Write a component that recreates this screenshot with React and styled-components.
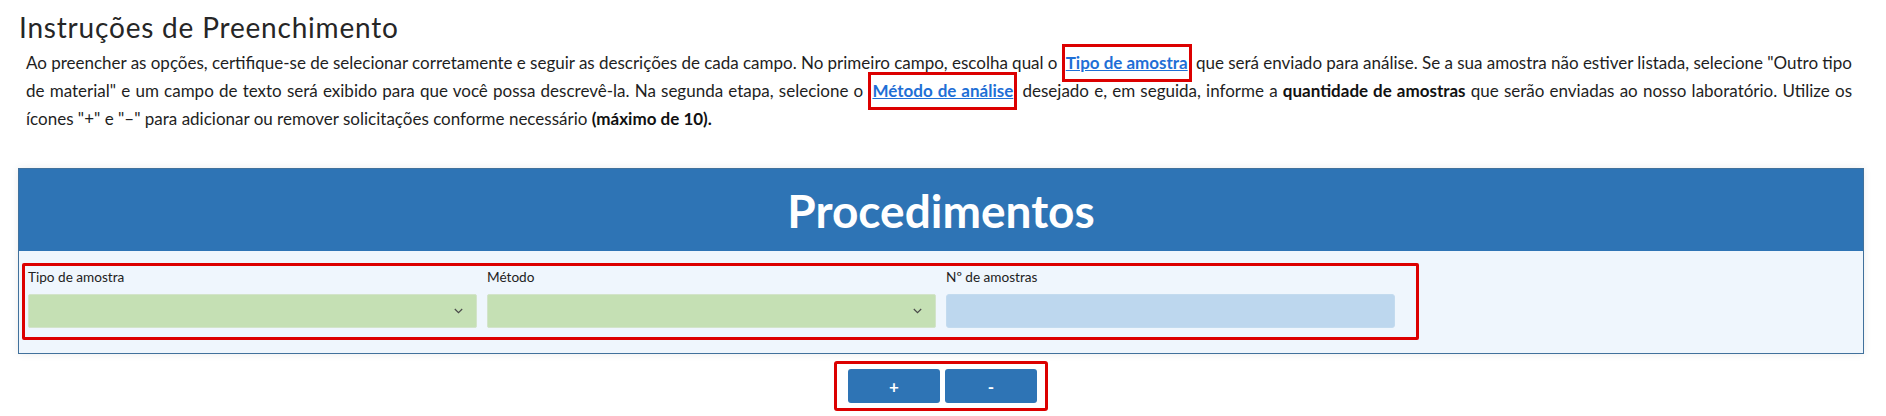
import React from 'react'
import styled, { createGlobalStyle } from 'styled-components'

const GlobalStyle = createGlobalStyle`
    body {
        margin: 0;
        background: #ffffff;
        font-family: Lato, "Open Sans", sans-serif;
        color: #222222;
    }
`

function Chevron() {
    return (
        <svg width="9" height="6" viewBox="0 0 9 6">
            <polyline points="0.8,1 4.5,4.6 8.2,1" fill="none" stroke="#4a4a4a" strokeWidth="1.2" />
        </svg>
    )
}

function App() {
    return (
        <Page>
            <GlobalStyle />
            <Title>Instruções de Preenchimento</Title>
            <Intro>
                <Line>
                    Ao preencher as opções, certifique-se de selecionar corretamente e seguir as descrições de cada campo. No primeiro campo, escolha qual o <Marked href="#">Tipo de amostra</Marked> que será enviado para análise. Se a sua amostra não estiver listada, selecione "Outro tipo
                </Line>
                <Line>
                    de material" e um campo de texto será exibido para que você possa descrevê-la. Na segunda etapa, selecione o <Marked href="#">Método de análise</Marked> desejado e, em seguida, informe a <b>quantidade de amostras</b> que serão enviadas ao nosso laboratório. Utilize os
                </Line>
                <Line $last>
                    ícones "+" e "–" para adicionar ou remover solicitações conforme necessário <b>(máximo de 10).</b>
                </Line>
            </Intro>

            <Panel>
                <PanelHeader>Procedimentos</PanelHeader>
                <PanelBody>
                    <FieldsRow>
                        <Field>
                            <Label>Tipo de amostra</Label>
                            <Select><Chevron /></Select>
                        </Field>
                        <Field>
                            <Label>Método</Label>
                            <Select><Chevron /></Select>
                        </Field>
                        <Field>
                            <Label>Nº de amostras</Label>
                            <Input />
                        </Field>
                    </FieldsRow>
                </PanelBody>
            </Panel>

            <Actions>
                <ActionGroup>
                    <Button>+</Button>
                    <Button>-</Button>
                </ActionGroup>
            </Actions>
        </Page>
    )
}

export default App

const Page = styled.div`
    padding: 11px 22px 0 18px;
`

const Title = styled.h3`
    margin: 0;
    padding-left: 1px;
    font-size: 28px;
    line-height: 32px;
    letter-spacing: 0.8px;
    font-weight: 400;
    color: #262626;
`

const Intro = styled.p`
    margin: 6px 12px 0 8px;
    font-size: 17px;
    line-height: 28px;
    word-spacing: -1.5px;
    color: #1e1e1e;

    b {
        font-weight: 700;
        color: #111111;
    }
`

const Line = styled.span`
    display: block;
    text-align: justify;
    text-align-last: ${({ $last }) => ($last ? 'left' : 'justify')};
    word-spacing: ${({ $last }) => ($last ? 'normal' : '-1.5px')};
`

const Marked = styled.a`
    color: #1f6fd6;
    font-weight: 700;
    text-decoration: underline;
    border: 3px solid #dc0000;
    padding: 5px 1px 6px;
`

const Panel = styled.section`
    margin-top: 35px;
    border: 1px solid #41719c;
    background: #eff6fd;
    box-shadow: 0 0 8px rgba(0, 0, 0, 0.08);
`

const PanelHeader = styled.h2`
    margin: 0;
    height: 82px;
    display: flex;
    align-items: center;
    justify-content: center;
    background: #2e74b5;
    color: #ffffff;
    font-size: 46px;
    font-weight: 700;
`

const PanelBody = styled.div`
    padding: 12px 3px 13px 3px;
`

const FieldsRow = styled.div`
    display: grid;
    grid-template-columns: repeat(3, 449px);
    column-gap: 10px;
    width: fit-content;
    padding: 2px 21px 9px 3px;
    border: 3px solid #dc0000;
    border-radius: 2px;
`

const Field = styled.div`
    display: flex;
    flex-direction: column;
    gap: 8px;
`

const Label = styled.label`
    font-size: 13.6px;
    line-height: 18px;
    color: #222222;
`

const Select = styled.div`
    height: 34px;
    box-sizing: border-box;
    display: flex;
    align-items: center;
    justify-content: flex-end;
    padding-right: 13px;
    background: #c5e0b4;
    border: 1px solid #d3e4ca;
    border-radius: 2px;
`

const Input = styled.div`
    height: 34px;
    box-sizing: border-box;
    background: #bdd7ee;
    border: 1px solid #c3dbef;
    border-radius: 3px;
`

const Actions = styled.div`
    display: flex;
    justify-content: center;
    margin-top: 7px;
`

const ActionGroup = styled.div`
    display: flex;
    gap: 5px;
    padding: 5px 8px 5px 11px;
    border: 3px solid #dc0000;
    border-radius: 3px;
`

const Button = styled.button`
    width: 92px;
    height: 34px;
    border: none;
    border-radius: 3px;
    background: #2e74b5;
    color: #ffffff;
    font-family: Lato, sans-serif;
    font-size: 17px;
    font-weight: 700;
`
